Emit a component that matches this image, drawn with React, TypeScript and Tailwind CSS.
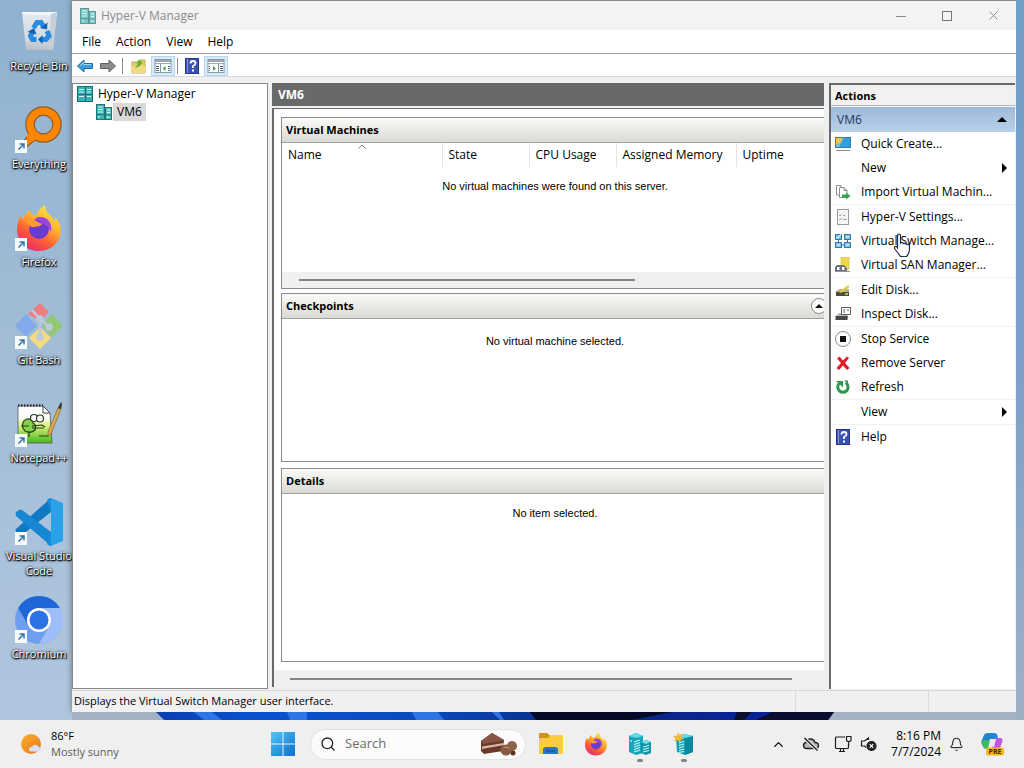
import React from 'react'
import { Bell, ChevronUp, Search, X } from 'lucide-react'

interface IconProps {
  className?: string
}

const ShortcutArrow: React.FC = () => (
  <g>
    <rect x="0" y="34" width="12" height="13" fill="#f8fbfd" />
    <path d="M3.500 43.500 L8.500 38.500 M4.500 38 H9 V42.500" fill="none" stroke="#3573a8" strokeWidth="1.500" />
  </g>
)

const RecycleBin: React.FC = () => (
  <svg viewBox="0 0 48 48" className="h-12 w-12">
    <defs>
      <linearGradient id="bin" x1="0" y1="0" x2="0" y2="1">
        <stop offset="0" stopColor="#e3eaf0" />
        <stop offset="0.7" stopColor="#d2dae2" />
        <stop offset="1" stopColor="#b9bfc6" />
      </linearGradient>
    </defs>
    <path d="M7 4 L42 4 L38 41 Q38 42 36 42 L13 42 Q11 42 11 41 Z" fill="url(#bin)" />
    <path d="M7 4 L42 4 L41.500 8 L7.500 6 Z" fill="#f3f6f9" />
    <path d="M36 6 L42 4 L38 41 L34 42 Z" fill="#c6cfd8" />
    <g fill="none" stroke="#2a8ade" strokeWidth="5">
      <path d="M18.500 20 L22 14.500 H26 L29 19" />
      <path d="M32 23 L34 28 L31 31.500 H26" />
      <path d="M21.500 31.500 H17.500 L15.500 28 L18 23" />
    </g>
    <path d="M25 20 L32 21.500 L32.500 14.500 Z M27.500 27 L23 31.500 L27.500 36 Z M12.500 24 L19 20 L21.500 26.500 Z" fill="#1164b4" />
  </svg>
)

const Everything: React.FC = () => (
  <svg viewBox="0 0 48 48" className="h-12 w-12">
    <path d="M14 29 L20 34 L8 44 L4 40 Z" fill="#ff8400" stroke="#8a5a30" strokeWidth="1.200" />
    <circle cx="28.500" cy="18.500" r="13.500" fill="none" stroke="#8a5a30" strokeWidth="9.500" />
    <circle cx="28.500" cy="18.500" r="13.500" fill="none" stroke="#ff8400" strokeWidth="7.200" />
    <path d="M14 27 L21 33 L17 36 L11 31 Z" fill="#ff8400" />
    <ShortcutArrow />
  </svg>
)

const FirefoxGlyph: React.FC<{ id: string }> = ({ id }) => (
  <g>
    <defs>
      <linearGradient id={id} x1="0.85" y1="0" x2="0.25" y2="1">
        <stop offset="0" stopColor="#fff04a" />
        <stop offset="0.4" stopColor="#ffb02e" />
        <stop offset="0.7" stopColor="#ff5a36" />
        <stop offset="1" stopColor="#e4267c" />
      </linearGradient>
    </defs>
    <path
      d="M24 47 C10 47 2 37 2 25 C2 19 4 14 6 11 C6 14 7 15 8 16 C9 12 12 8 15 6 C15 9 17 11 20 12 C23 8 25 4 30 1 C30 7 33 9 36 12 C38 14 38 16 39 17 C40 16 40 14 40 13 C44 17 46 22 46 27 C45 39 36 47 24 47 Z"
      fill={`url(#${id})`}
    />
    <circle cx="24" cy="25" r="10" fill="#6a3bd0" />
    <path d="M24 13 C32 12 38 19 36 28 C34 24 32 21 27 20 C24 16 22 16 19 16 C21 14 22 13 24 13 Z" fill="#9b45dc" />
    <path d="M10 17 C14 13 20 16 23 18 L27 20 C25 23 22 22 19 23 C16 24 15 21 10 17 Z" fill="#ff9a2c" />
  </g>
)

const Firefox: React.FC = () => (
  <svg viewBox="0 0 48 48" className="h-12 w-12">
    <FirefoxGlyph id="fx-desktop" />
    <ShortcutArrow />
  </svg>
)

const GitBash: React.FC = () => (
  <svg viewBox="0 0 48 48" className="h-12 w-12">
    <path d="M25 1 L34 10 L25 19 L13 12 Z" fill="#ee7d80" />
    <path d="M11 12 L22 24 L11 35 L0 24 Z" fill="#82abee" />
    <path d="M37 12 L48 24 L37 35 L27 24 Z" fill="#93c872" />
    <path d="M25 25 L36 36 L25 47 L14 36 Z" fill="#f3dc80" />
    <g stroke="#b9cbdc" strokeWidth="2.500" fill="#b9cbdc">
      <path d="M17 8 L25 17 V36 M25 17 L34 25" fill="none" />
      <circle cx="25" cy="17" r="2.500" />
      <circle cx="25" cy="35" r="2.500" />
      <circle cx="34" cy="25" r="2.500" />
    </g>
    <ShortcutArrow />
  </svg>
)

const NotepadPlus: React.FC = () => (
  <svg viewBox="0 0 48 48" className="h-12 w-12">
    <defs>
      <linearGradient id="npp" x1="0" y1="0" x2="0" y2="1">
        <stop offset="0.3" stopColor="#ffffff" />
        <stop offset="0.55" stopColor="#d5ef7a" />
        <stop offset="1" stopColor="#45b81c" />
      </linearGradient>
    </defs>
    <path d="M3 6 H28 L35 13 L37 43 L3 43 Z" fill="url(#npp)" stroke="#555" strokeWidth="0.800" />
    <path d="M3 5.500 H28" stroke="#333" strokeWidth="2.500" strokeDasharray="1.500 1.500" />
    <path d="M28 6 V13 H35 Z" fill="#fff" stroke="#444" strokeWidth="1" />
    <g fill="none" stroke="#263c1c" strokeWidth="1.200">
      <path d="M8 28 Q6 21 12 19 Q17 18 18 23 Q22 25 20 30 Q16 34 10 31 Z" fill="#83d24a" />
      <circle cx="19" cy="18" r="3.500" fill="#fff" />
      <circle cx="25" cy="18.500" r="3.500" fill="#fff" />
      <path d="M6 26 H14 M17 26 L27 25 L30 27 M17 28 H29 M24 36 H34 M14 31 V37" />
    </g>
    <path d="M43 8 L46 9 L36 34 L33 36 L33 32 Z" fill="#d9aa50" stroke="#7c622f" strokeWidth="0.700" />
    <path d="M43 8 L46 2 L47 4 L46 9 Z" fill="#333" />
    <ShortcutArrow />
  </svg>
)

const VsCode: React.FC = () => (
  <svg viewBox="0 0 48 48" className="h-12 w-12">
    <path d="M36 0 L48 5 V43 L36 48 Z" fill="#29a3e8" />
    <path d="M36 0 V14 L7 37 Q5 38 4 37 L1 34 Q0 32 1 31 Z" fill="#0f79c4" />
    <path d="M36 48 V34 L7 12 Q5 11 4 12 L1 14 Q0 16 1 18 Z" fill="#1787d4" />
    <path d="M36 0 Q34 0 32 2 L36 14 Z M36 48 Q34 48 32 46 L36 34 Z" fill="#1b8cda" />
    <ShortcutArrow />
  </svg>
)

const Chromium: React.FC = () => (
  <svg viewBox="0 0 48 48" className="h-12 w-12">
    <circle cx="24" cy="24" r="24" fill="#6f9df0" />
    <path d="M3.200 12 A24 24 0 0 1 44.800 12 L24 12 A12 12 0 0 0 13.600 30 Z" fill="#1f66d8" />
    <path d="M44.800 12 A24 24 0 0 1 24 48 L34.400 30 A12 12 0 0 0 24 12 Z" fill="#9fbdf8" />
    <circle cx="24" cy="24" r="12" fill="#fff" />
    <circle cx="24" cy="24" r="9.500" fill="#2a72e5" />
    <ShortcutArrow />
  </svg>
)

const ServerIcon: React.FC<IconProps> = ({ className }) => (
  <svg viewBox="0 0 16 16" className={className}>
    <rect x="0.500" y="0.500" width="8" height="15" fill="#3fb6b0" stroke="#1d7377" />
    <rect x="9.500" y="3.500" width="6" height="12" fill="#52c4be" stroke="#1d7377" />
    <path d="M2 3 H7 M2 5.500 H7 M2 8 H7 M11 6 H14 M11 8.500 H14" stroke="#e6fbfa" />
    <path d="M1 10.500 H8 M10 11 H15" stroke="#1d7377" />
    <path d="M2 13 H4 M11 13 H13" stroke="#e6fbfa" />
  </svg>
)

const RackIcon: React.FC<IconProps> = ({ className }) => (
  <svg viewBox="0 0 16 16" className={className}>
    <rect x="0.500" y="0.500" width="8" height="15" fill="#35b3b3" stroke="#156f78" />
    <rect x="8.500" y="0.500" width="7" height="15" fill="#35b3b3" stroke="#156f78" />
    <path d="M2 3.500 H7 M2 6 H7 M2 10.500 H7 M10 3.500 H14 M10 6 H14 M10 10.500 H14" stroke="#d8f5f5" />
    <path d="M0 8.500 H16" stroke="#17727a" />
  </svg>
)

const BackArrow: React.FC = () => (
  <svg viewBox="0 0 16 16" className="h-4 w-4">
    <path d="M0.500 8 L7 2 V5.500 H15.500 V10.500 H7 V14 Z" fill="#3d9fd9" stroke="#1e6a9e" />
    <path d="M3 8 L6.500 4.500 V6.500 H14" fill="none" stroke="#92d4f5" />
  </svg>
)

const ForwardArrow: React.FC = () => (
  <svg viewBox="0 0 16 16" className="h-4 w-4">
    <path d="M15.500 8 L9 2 V5.500 H0.500 V10.500 H9 V14 Z" fill="#8d8d8d" stroke="#5e5e5e" />
  </svg>
)

const UpFolder: React.FC = () => (
  <svg viewBox="0 0 16 16" className="h-4 w-4">
    <path d="M1 4 H6 L8 2 H14 V15 H1 Z" fill="#e5cb66" stroke="#c9ac4c" />
    <path d="M1 8 H14 V15 H1 Z" fill="#f1dc85" />
    <path d="M3 9.500 Q6 9 7 5.500 L5 5.500 L9 2 L12 5.500 L10 5.500 Q9 10 3 9.500 Z" fill="#57b336" />
  </svg>
)

const PaneIcon: React.FC<{ flip?: boolean }> = ({ flip }) => (
  <svg viewBox="0 0 18 16" className="h-4 w-[18px]">
    <rect x="1" y="1.500" width="16" height="13" fill="#fff" stroke="#8b98a8" />
    <path d="M1 3 H17" stroke="#7c8b9d" strokeWidth="1.500" />
    <path d="M1 5.500 H17" stroke="#9ba8b6" />
    <path d={flip ? 'M11.500 6 V15' : 'M6.500 6 V15'} stroke="#8594a6" />
    <path d={flip ? 'M13 8.500 H16 M13 10.500 H16 M13 12.500 H16 M2 8.500 H3 M2 10.500 H3 M2 12.500 H3' : 'M2 8.500 H5 M2 10.500 H5 M2 12.500 H5 M14 8.500 H16 M14 10.500 H16 M14 12.500 H16'} stroke="#4f6b8c" />
    <path d={flip ? 'M6 8 L9 10.500 L6 13 Z' : 'M11.500 8 L8.500 10.500 L11.500 13 Z'} fill="#4ca53a" />
  </svg>
)

const HelpIcon: React.FC = () => (
  <svg viewBox="0 0 16 16" className="h-4 w-4">
    <rect x="1.500" y="0.500" width="13" height="15" fill="#3b52b5" stroke="#27367f" />
    <path d="M3.500 1 V15" stroke="#8795dd" />
    <path d="M6.500 5.500 Q6.500 3 9 3 Q11.500 3 11.500 5.300 Q11.500 7 9 8 V10" fill="none" stroke="#fff" strokeWidth="1.800" />
    <rect x="8" y="11.500" width="2" height="2" fill="#fff" />
  </svg>
)

const QuickCreateIcon: React.FC = () => (
  <svg viewBox="0 0 16 16" className="h-4 w-4">
    <rect x="0.500" y="1.500" width="15" height="10" fill="#2f9fe0" stroke="#3c7ca8" />
    <path d="M1 2 H9 L4 11 H1 Z" fill="#8cc0a0" />
    <path d="M1 2 H7 L5 7 L1 8 Z" fill="#e8c65a" />
    <path d="M1 14.500 H15" stroke="#8c8c8c" />
  </svg>
)

const ImportIcon: React.FC = () => (
  <svg viewBox="0 0 16 16" className="h-4 w-4">
    <path d="M1.500 1.500 H6 V11 H1.500 Z" fill="#fff" stroke="#8f8f8f" />
    <path d="M4.500 3.500 H9 L12 6.500 V13.500 H4.500 Z" fill="#fff" stroke="#8f8f8f" />
    <path d="M9 3.500 V6.500 H12" fill="none" stroke="#8f8f8f" />
    <path d="M7 10.500 H11 V8.500 L15.500 12 L11 15.500 V13.500 H7 Z" fill="#35a44a" />
  </svg>
)

const SettingsIcon: React.FC = () => (
  <svg viewBox="0 0 16 16" className="h-4 w-4">
    <rect x="2.500" y="0.500" width="11" height="15" fill="#f6f6f6" stroke="#9b9b9b" />
    <path d="M4 6 L5 7 L7 5 M4 10 L5 11 L7 9 M8 6.500 H10 M8 10.500 H12" fill="none" stroke="#a8a8a8" />
  </svg>
)

const SwitchIcon: React.FC = () => (
  <svg viewBox="0 0 16 16" className="h-4 w-4">
    <path d="M3.500 4 V12 M12.500 4 V12 M3.500 12 H12.500" stroke="#2f6c97" />
    <g fill="#79c3ea" stroke="#2e7fae">
      <rect x="0.500" y="1.500" width="6" height="5" />
      <rect x="9.500" y="1.500" width="6" height="5" />
      <rect x="0.500" y="9.500" width="6" height="5" />
      <rect x="9.500" y="9.500" width="6" height="5" />
    </g>
    <path d="M2 4 L3 5 L6 1 M11 4 H14 M2 12 H5 M11 12 H14" fill="none" stroke="#fff" />
  </svg>
)

const SanIcon: React.FC = () => (
  <svg viewBox="0 0 16 16" className="h-4 w-4">
    <rect x="6" y="0.500" width="8" height="12" fill="#f0d84a" stroke="#d3b938" strokeWidth="0.600" />
    <path d="M2 8 H9 L12 11 V14 H0 V10 Z" fill="#6b7079" />
    <path d="M2 10 H4.500 V13 H2 Z M7 10 H9.500 V13 H7 Z" fill="#fff" />
    <path d="M0 14.500 H15" stroke="#8294a6" strokeWidth="1" />
  </svg>
)

const EditDiskIcon: React.FC = () => (
  <svg viewBox="0 0 16 16" className="h-4 w-4">
    <path d="M1 9 L5 7 H14 V13 H1 Z" fill="#b8b08a" />
    <rect x="1" y="10" width="13" height="4" fill="#4f4c3f" />
    <path d="M4 10 L13 3 L14.500 5 L6 11 Z" fill="#e4cf45" />
    <rect x="10" y="11" width="3" height="2" fill="#8fcf4f" />
  </svg>
)

const InspectDiskIcon: React.FC = () => (
  <svg viewBox="0 0 16 16" className="h-4 w-4">
    <path d="M1 10 L4 7 H13 V13 H1 Z" fill="#b6b6b6" />
    <rect x="0.500" y="10" width="12" height="4" fill="#484848" />
    <rect x="6.500" y="1.500" width="9" height="7" fill="#fff" stroke="#5f6670" />
    <path d="M8 4 H10 M12 4 H14 M8 6 H10" stroke="#5f6670" />
  </svg>
)

const StopIcon: React.FC = () => (
  <svg viewBox="0 0 16 16" className="h-4 w-4">
    <circle cx="8" cy="8" r="7.500" fill="#fff" stroke="#8a8a8a" />
    <rect x="5" y="5" width="6" height="6" fill="#111" />
  </svg>
)

const RemoveIcon: React.FC = () => (
  <svg viewBox="0 0 16 16" className="h-4 w-4">
    <path d="M2 3.500 L4.500 1.500 L8 5.500 L12 1.500 L14 3 L10 8 L14.500 13 L12 15 L8 10.500 L4 15 L1.500 13 L6 8 Z" fill="#d81f2a" />
  </svg>
)

const RefreshIcon: React.FC = () => (
  <svg viewBox="0 0 16 16" className="h-4 w-4">
    <path d="M4 4.500 Q1.500 8 4 11.500 Q8 15 12 11.500 Q14.500 7 11 3.500" fill="none" stroke="#2f9a4b" strokeWidth="3" />
    <path d="M1 2 H8 V8.500 Z" fill="#2f9a4b" />
    <path d="M9 1.500 H13 V5 Z" fill="#2f9a4b" />
  </svg>
)

const HandCursor: React.FC<IconProps> = ({ className }) => (
  <svg viewBox="0 0 18 25" className={className}>
    <path
      d="M5 1.500 Q7 0.500 7.500 2.500 V10 Q9 8.500 10.500 10.500 Q12 9.500 13.500 11.500 Q16 10.500 16.500 13 V17 Q16 21 13.500 23.500 H7.500 Q5 20 1.500 15.500 Q1 13 3.500 13.500 L4.500 15 V3 Z"
      fill="#fff"
      fillOpacity="0.85"
      stroke="#222c44"
      strokeWidth="1.200"
    />
  </svg>
)

const desktopIcons = [
  { label: 'Recycle Bin', icon: <RecycleBin /> },
  { label: 'Everything', icon: <Everything /> },
  { label: 'Firefox', icon: <Firefox /> },
  { label: 'Git Bash', icon: <GitBash /> },
  { label: 'Notepad++', icon: <NotepadPlus /> },
  { label: 'Visual Studio\nCode', icon: <VsCode /> },
  { label: 'Chromium', icon: <Chromium /> },
]

const DesktopIcons: React.FC = () => (
  <nav className="w-[72px] shrink-0 pl-[6px]">
    {desktopIcons.map(({ label, icon }) => (
      <button key={label} className="flex h-[98px] w-full flex-col items-center gap-[2px] pt-2">
        {icon}
        <span className="whitespace-pre text-center text-[11px] leading-[15px] text-white [text-shadow:1px_1px_1px_#000,0_1px_2px_#000,0_0_3px_#000]">
          {label}
        </span>
      </button>
    ))}
  </nav>
)

const TitleBar: React.FC = () => (
  <header className="flex h-[30px] items-center border-t border-[#8a8a8a] bg-[#f3f3f3] pl-2 text-[#8c8c8c]">
    <ServerIcon className="h-4 w-4 opacity-70" />
    <h1 className="ml-[5px] flex-1 text-xs">Hyper-V Manager</h1>
    <button aria-label="Minimize" className="flex w-[46px] justify-center">
      <svg viewBox="0 0 10 10" className="h-[10px] w-[10px]"><path d="M0 5.500 H10" stroke="#8c8c8c" /></svg>
    </button>
    <button aria-label="Maximize" className="flex w-[46px] justify-center">
      <svg viewBox="0 0 10 10" className="h-[10px] w-[10px]"><rect x="0.500" y="0.500" width="9" height="9" fill="none" stroke="#777" /></svg>
    </button>
    <button aria-label="Close" className="flex w-[46px] justify-center">
      <X size={15} strokeWidth={1.5} />
    </button>
  </header>
)

const MenuBar: React.FC = () => (
  <nav className="flex h-6 items-center gap-[15px] border-b border-[#a0a0a0] bg-white pl-[10px] text-xs">
    <button>File</button>
    <button>Action</button>
    <button>View</button>
    <button>Help</button>
  </nav>
)

const Toolbar: React.FC = () => (
  <div className="flex h-[23px] items-center border-b border-[#d9d9d9] bg-white pl-[5px] pt-px">
    <button aria-label="Back"><BackArrow /></button>
    <button aria-label="Forward" className="ml-[7px]"><ForwardArrow /></button>
    <span className="mx-[6px] h-4 w-px bg-[#8d8d8d]" />
    <button aria-label="Up one level" className="ml-[2px]"><UpFolder /></button>
    <button aria-label="Show console tree" className="ml-1 flex h-5 w-6 items-center justify-center border border-[#b5d7f3] bg-[#d9ebf9]"><PaneIcon /></button>
    <span className="ml-[2px] h-4 w-px bg-[#8d8d8d]" />
    <button aria-label="Help" className="ml-[6px]"><HelpIcon /></button>
    <button aria-label="Show action pane" className="ml-1 flex h-5 w-6 items-center justify-center border border-[#b5d7f3] bg-[#d9ebf9]"><PaneIcon flip /></button>
  </div>
)

const ConsoleTree: React.FC = () => (
  <aside className="w-[196px] shrink-0 border border-[#828790] bg-white pt-px text-xs">
    <ul>
      <li>
        <button className="flex h-[18px] items-center gap-[5px] pl-1">
          <RackIcon className="h-4 w-4" />
          Hyper-V Manager
        </button>
        <ul>
          <li>
            <button className="flex h-[18px] items-center gap-px pl-[23px]">
              <ServerIcon className="h-4 w-4" />
              <span className="bg-[#d9d9d9] px-1 leading-[18px]">VM6</span>
            </button>
          </li>
        </ul>
      </li>
    </ul>
  </aside>
)

interface SectionProps {
  title: string
  className: string
  collapsible?: boolean
  children: React.ReactNode
}

const Section: React.FC<SectionProps> = ({ title, className, collapsible, children }) => (
  <section className={`flex flex-col overflow-hidden border border-r-0 border-[#8c8c8c] bg-white ${className}`}>
    <div className="flex h-[25px] shrink-0 items-center justify-between border-b border-[#a0a09a] bg-gradient-to-b from-[#fbfbfa] to-[#d9dad2] pl-1">
      <h2 className="text-[11px] font-bold">{title}</h2>
      {collapsible && (
        <button aria-label="Collapse" className="-mr-[3px] flex h-4 w-4 items-center justify-center rounded-full border border-[#888] bg-white">
          <svg viewBox="0 0 8 4" className="h-1 w-2"><path d="M0 4 L4 0 L8 4 Z" fill="#111" /></svg>
        </button>
      )}
    </div>
    {children}
  </section>
)

const columns = [
  { name: 'Name', width: 'w-[160px]' },
  { name: 'State', width: 'w-[87px]' },
  { name: 'CPU Usage', width: 'w-[87px]' },
  { name: 'Assigned Memory', width: 'w-[120px]' },
  { name: 'Uptime', width: '' },
]

const MachineTable: React.FC = () => (
  <table className="w-full table-fixed text-left text-xs">
    <thead>
      <tr className="h-6">
        {columns.map(({ name, width }, i) => (
          <th key={name} scope="col" className={`relative border-r border-[#e4e4e4] px-[6px] font-normal last:border-r-0 ${width}`}>
            {name}
            {i === 0 && (
              <svg viewBox="0 0 8 5" className="absolute left-[76px] top-px h-[5px] w-2">
                <path d="M0.500 4.500 L4 1 L7.500 4.500" fill="none" stroke="#777" />
              </svg>
            )}
          </th>
        ))}
      </tr>
    </thead>
    <tbody>
      <tr>
        <td colSpan={5} className="h-[38px] pl-1 text-center font-['Liberation_Sans',sans-serif] text-[11px]">
          No virtual machines were found on this server.
        </td>
      </tr>
    </tbody>
  </table>
)

const Workspace: React.FC = () => (
  <main className="mb-[2px] ml-1 flex min-w-0 flex-1 flex-col">
    <h2 className="h-[23px] bg-[#696969] pl-[6px] text-xs font-bold leading-[23px] text-white">VM6</h2>
    <div className="mt-[2px] flex flex-1 flex-col border-l-2 border-t border-[#696969] bg-white">
      <div className="flex flex-1 flex-col pb-2 pl-[7px] pt-2">
        <Section title="Virtual Machines" className="h-[172px]">
          <MachineTable />
          <div className="mt-auto flex h-4 items-center bg-[#f0f0f0] pl-[17px]">
            <div className="h-[2px] w-[64%] bg-[#858585]" />
          </div>
        </Section>
        <Section title="Checkpoints" className="mt-1 h-[169px]" collapsible>
          <p className="pl-1 pt-[14px] text-center font-['Liberation_Sans',sans-serif] text-[11px] leading-4">No virtual machine selected.</p>
        </Section>
        <Section title="Details" className="mt-[6px] min-h-[120px] flex-1">
          <p className="pl-1 pt-[11px] text-center font-['Liberation_Sans',sans-serif] text-[11px] leading-4">No item selected.</p>
        </Section>
      </div>
      <div className="flex h-[17px] items-center bg-[#f0f0f0] px-4">
        <div className="h-[2px] w-[97%] bg-[#858585]" />
      </div>
    </div>
  </main>
)

interface Action {
  label: string
  icon?: React.ReactNode
  submenu?: boolean
  divider?: boolean
}

const actions: Action[] = [
  { label: 'Quick Create...', icon: <QuickCreateIcon /> },
  { label: 'New', submenu: true },
  { label: 'Import Virtual Machin...', icon: <ImportIcon />, divider: true },
  { label: 'Hyper-V Settings...', icon: <SettingsIcon /> },
  { label: 'Virtual Switch Manage...', icon: <SwitchIcon /> },
  { label: 'Virtual SAN Manager...', icon: <SanIcon />, divider: true },
  { label: 'Edit Disk...', icon: <EditDiskIcon /> },
  { label: 'Inspect Disk...', icon: <InspectDiskIcon />, divider: true },
  { label: 'Stop Service', icon: <StopIcon /> },
  { label: 'Remove Server', icon: <RemoveIcon /> },
  { label: 'Refresh', icon: <RefreshIcon />, divider: true },
  { label: 'View', submenu: true, divider: true },
  { label: 'Help', icon: <HelpIcon /> },
]

const ActionsPane: React.FC = () => (
  <aside className="relative ml-[5px] mr-px w-[186px] shrink-0 border-l-2 border-t-2 border-[#696969] bg-white text-xs">
    <h2 className="h-[21px] border-b border-[#a9b4c2] bg-[#f3f0f0] pl-1 text-[11px] font-bold leading-[21px]">Actions</h2>
    <button className="mt-px flex h-[25px] w-full items-center justify-between bg-gradient-to-b from-[#9db8d9] to-[#b9d1ea] pl-[6px] pr-2 text-[#1e395b]">
      VM6
      <svg viewBox="0 0 10 5" className="h-[5px] w-[10px]"><path d="M0 5 L5 0 L10 5 Z" fill="#000" /></svg>
    </button>
    <ul>
      {actions.map(({ label, icon, submenu, divider }) => (
        <li key={label} className={divider ? 'border-b border-[#f0f0f0]' : ''}>
          <button className="flex h-6 w-full items-center pl-1 pr-2 text-left">
            <span className="mr-[10px] h-4 w-4 shrink-0">{icon}</span>
            <span className="flex-1 whitespace-nowrap">{label}</span>
            {submenu && (
              <svg viewBox="0 0 5 10" className="h-[10px] w-[5px]"><path d="M0 0 L5 5 L0 10 Z" fill="#000" /></svg>
            )}
          </button>
        </li>
      ))}
    </ul>
    <HandCursor className="absolute left-[62px] top-[148px] h-[25px] w-[18px]" />
  </aside>
)

const StatusBar: React.FC = () => (
  <footer className="flex h-[22px] items-center border-t border-[#d7d7d7] bg-[#f0f0f0] pl-[2px] text-[11px]">
    <p className="flex-1">Displays the Virtual Switch Manager user interface.</p>
    <div className="h-full w-[133px] border-l border-[#dcdcdc]" />
    <div className="h-full w-[88px] border-l border-[#dcdcdc]" />
  </footer>
)

const WallpaperStrip: React.FC = () => (
  <svg viewBox="0 0 944 8" preserveAspectRatio="none" className="h-2 w-full">
    <defs>
      <linearGradient id="strip">
        <stop offset="0" stopColor="#0a3fae" />
        <stop offset="0.15" stopColor="#0b52d0" />
        <stop offset="0.4" stopColor="#0a49bd" />
        <stop offset="0.62" stopColor="#0a2a80" />
        <stop offset="1" stopColor="#0b1fa0" />
      </linearGradient>
    </defs>
    <rect width="944" height="8" fill="#a3b2c2" />
    <path d="M84 0 H762 L756 8 H92 Z" fill="url(#strip)" />
    <path d="M122 0 H140 L150 8 H132 Z M215 0 H235 V8 H218 Z M340 0 H366 L372 8 H344 Z M420 0 H427 L432 8 H428 Z" fill="#2f74e6" />
    <path d="M458 0 H600 L560 8 H464 Z" fill="#050a26" />
    <path d="M665 0 H680 L672 8 H662 Z M700 0 H762 L756 8 H684 Z" fill="#0a0f30" />
  </svg>
)

const WeatherIcon: React.FC = () => (
  <svg viewBox="0 0 22 22" className="h-[22px] w-[22px]">
    <defs>
      <linearGradient id="sun" x1="0" y1="0" x2="1" y2="1">
        <stop offset="0" stopColor="#fbb02c" />
        <stop offset="1" stopColor="#e9731b" />
      </linearGradient>
    </defs>
    <circle cx="11" cy="11" r="10" fill="url(#sun)" />
    <path d="M11 18.500 Q8.500 18 9 15.500 Q10 13.500 12 14 Q13.500 11 16.500 12 Q18.500 12.500 19 14.500 Q21.800 14.500 21.500 17 Q21 18.500 19 18.500 Z" fill="#d9e2f5" />
  </svg>
)

const StartIcon: React.FC = () => (
  <svg viewBox="0 0 24 24" className="h-6 w-6">
    <defs>
      <linearGradient id="win" x1="0" y1="0" x2="1" y2="1">
        <stop offset="0" stopColor="#51c6f5" />
        <stop offset="1" stopColor="#0a6fce" />
      </linearGradient>
    </defs>
    <path d="M0 0 H11.500 V11.500 H0 Z M12.500 0 H24 V11.500 H12.500 Z M0 12.500 H11.500 V24 H0 Z M12.500 12.500 H24 V24 H12.500 Z" fill="url(#win)" />
  </svg>
)

const ChocolateIcon: React.FC = () => (
  <svg viewBox="0 0 38 24" className="h-6 w-[38px]">
    <path d="M1 9 L12 1 L24 8 L23 19 L4 22 L1 19 Z" fill="#6b3a2c" />
    <path d="M1 9 L12 1 L24 8 L4 12 Z" fill="#8a5442" />
    <path d="M2 14.500 L24 11 V13 L2 17 Z" fill="#dcb6a0" />
    <circle cx="32" cy="14" r="5" fill="#8c6249" />
    <circle cx="26" cy="18" r="5.500" fill="#8a5a43" />
    <path d="M22 17 Q26 12 31 17 Q26 15 22 17 Z" fill="#b98c74" />
    <circle cx="33" cy="21" r="2.500" fill="#5b3323" />
  </svg>
)

const FolderIcon: React.FC = () => (
  <svg viewBox="0 0 26 24" className="h-6 w-[26px]">
    <path d="M1 2 Q1 1 2 1 H9 L12 3.500 V8 H1 Z" fill="#cf9413" />
    <path d="M1 6 H10 L13 3 H24 Q25 3 25 4 V21 Q25 22 24 22 H2 Q1 22 1 21 Z" fill="#fbcc3d" />
    <path d="M5 22 V18 Q5 15 8 15 H17 Q20 15 20 18 V22 Z" fill="#2478c9" />
    <path d="M8 19 H17" stroke="#165899" strokeWidth="1.500" />
  </svg>
)

const HyperVIcon: React.FC = () => (
  <svg viewBox="0 0 24 24" className="h-6 w-6">
    <path d="M1 4 L8 1 L15 4 V21 L8 23 L1 20 Z" fill="#15a5b8" />
    <path d="M1 4 L8 1 L15 4 L8 6 Z" fill="#5fdbe6" />
    <path d="M13 10 L18 8 L23 10 V21 L18 23 L13 21 Z" fill="#1193a8" />
    <path d="M13 10 L18 8 L23 10 L18 12 Z" fill="#6fe0e9" />
    <path d="M2 8.500 L4 9.500 M6 10 L12 8 M6 12.500 L12 10.500 M6 15 L12 13 M6 17.500 L12 15.500 M6 20 L12 18 M15 15 L21 13.500 M15 17.500 L21 16 M15 20 L21 18.500" stroke="#c9f8fc" strokeWidth="1.200" />
  </svg>
)

const VmCreateIcon: React.FC = () => (
  <svg viewBox="0 0 24 24" className="h-6 w-6">
    <path d="M4 5 L12 2 L21 4 V20 L13 23 L5 20 Z" fill="#13a0b5" />
    <path d="M13 6 L21 4 V20 L13 23 Z" fill="#0c87a0" />
    <path d="M5 5 L12 2 L21 4 L13 6 Z" fill="#63dce7" />
    <path d="M7 11 L12 9.500 M7 13.500 L12 12 M7 16 L12 14.500 M7 18.500 L12 17 M7 20.500 L12 19.500" stroke="#c9f8fc" strokeWidth="1.200" />
    <path d="M6.500 0 L7.500 3 L11 1.500 L9.500 5 L12 7 L9 7.500 L8 11 L6 8 L2 9.500 L3.500 6.500 L1 4 L5 3.500 Z" fill="#f6b93b" />
  </svg>
)

const CloudOffIcon: React.FC = () => (
  <svg viewBox="0 0 18 16" className="h-4 w-[18px]" fill="none" stroke="#1f1f1f" strokeWidth="1.400">
    <path d="M5 12.500 Q1.500 12.500 1.500 9.500 Q1.500 7 4 6.500 Q5 3 8.500 3 Q12 3 13 6.500 Q16.500 6.500 16.500 9.500 Q16.500 12.500 13 12.500 Z" fill="#b5b5b5" />
    <path d="M2.500 2 L15.500 14.500" stroke="#efefef" strokeWidth="3.500" />
    <path d="M2.500 2 L15.500 14.500" />
  </svg>
)

const NetworkIcon: React.FC = () => (
  <svg viewBox="0 0 18 18" className="h-[18px] w-[18px]" fill="none" stroke="#1f1f1f" strokeWidth="1.200">
    <path d="M11 2 H2.500 Q1.500 2 1.500 3 V12.500 Q1.500 13.500 2.500 13.500 H13.500 Q14.500 13.500 14.500 12.500 V9" />
    <path d="M5 16.500 H11 M6.500 13.500 V16.500 M9.500 13.500 V16.500" />
    <path d="M12.500 1.500 H17 V5 Q17 6.500 14.700 6.500 Q12.500 6.500 12.500 5 Z M14.700 6.500 V10" />
  </svg>
)

const MutedIcon: React.FC = () => (
  <svg viewBox="0 0 18 16" className="h-4 w-[18px]" fill="none" stroke="#1f1f1f" strokeWidth="1.200">
    <path d="M8.500 4 V2 L4.500 5 H1.500 V10 H4.500 L6 11.500" />
    <circle cx="11.500" cy="10" r="4.500" fill="#1f1f1f" />
    <path d="M9.700 8.200 L13.300 11.800 M13.300 8.200 L9.700 11.800" stroke="#fff" />
  </svg>
)

const CopilotIcon: React.FC = () => (
  <svg viewBox="0 0 24 24" className="h-6 w-6">
    <path d="M2 11 Q1 11 1.500 9 L4 3 Q5 1 8 1 H14 Q17 1 17.500 4 L18 7 L10 7 L7 14 H4 Z" fill="#1f86cf" />
    <path d="M1 10 L4 8 L10 8 L8 17 Q5 18 3 15 Z" fill="#3fb868" />
    <path d="M15 6 H20 Q23 6 22.500 9 L20 16 H12 Z" fill="#c15ae0" />
    <path d="M10 14 L13 7 L16 7 L14 15 Z" fill="#f6e3ef" />
    <rect x="6" y="15.500" width="18" height="8" rx="2" fill="#f8b51d" />
    <text x="15" y="22" textAnchor="middle" fontSize="7" fontWeight="700" fill="#3a2500">PRE</text>
  </svg>
)

const Taskbar: React.FC = () => (
  <footer className="flex h-12 shrink-0 items-center bg-[#efefef] pl-5 text-xs">
    <button className="flex w-[251px] items-center gap-[9px] text-left text-[11px] leading-4">
      <WeatherIcon />
      <span className="flex flex-col">
        <span>86°F</span>
        <span className="text-[#5d5d5d]">Mostly sunny</span>
      </span>
    </button>
    <button aria-label="Start"><StartIcon /></button>
    <label className="ml-[15px] flex h-[31px] w-[216px] items-center rounded-full border border-[#e2e2e2] bg-[#fbfbfb] pl-[9px] pr-[7px]">
      <Search size={16} strokeWidth={2} color="#222" />
      <input type="search" aria-label="Search" placeholder="Search" className="ml-[9px] min-w-0 flex-1 bg-transparent text-[13px] outline-none placeholder:text-[#6a6a6a]" />
      <ChocolateIcon />
    </label>
    <div className="ml-3 flex items-center gap-5">
      <button aria-label="File Explorer"><FolderIcon /></button>
      <button aria-label="Firefox">
        <svg viewBox="0 0 48 48" className="h-6 w-6"><FirefoxGlyph id="fx-task" /></svg>
      </button>
      <button aria-label="Hyper-V Manager" className="relative">
        <HyperVIcon />
        <span className="absolute -bottom-[6px] left-[9px] h-[3px] w-[6px] rounded-full bg-[#858585]" />
      </button>
      <button aria-label="Hyper-V Quick Create" className="relative">
        <VmCreateIcon />
        <span className="absolute -bottom-[6px] left-[9px] h-[3px] w-[6px] rounded-full bg-[#858585]" />
      </button>
    </div>
    <div className="ml-auto flex items-center pr-5">
      <button aria-label="Show hidden icons"><ChevronUp size={15} strokeWidth={2} /></button>
      <button aria-label="OneDrive" className="ml-4"><CloudOffIcon /></button>
      <button aria-label="Network" className="ml-[14px]"><NetworkIcon /></button>
      <button aria-label="Volume" className="ml-2"><MutedIcon /></button>
      <button className="ml-[13px] flex flex-col items-end leading-4">
        <span>8:16 PM</span>
        <span>7/7/2024</span>
      </button>
      <button aria-label="Notifications" className="ml-2"><Bell size={15} strokeWidth={1.5} /></button>
      <button aria-label="Copilot" className="ml-4"><CopilotIcon /></button>
    </div>
  </footer>
)

const App: React.FC = () => (
  <div className="flex min-h-screen flex-col font-['Open_Sans',sans-serif] text-black">
    <div className="flex flex-1 bg-gradient-to-b from-[#8fb2d0] via-[#a3bdd6] to-[#b0c6de]">
      <DesktopIcons />
      <div className="flex min-w-0 flex-1 flex-col">
        <div className="flex flex-1 flex-col bg-[#f0f0f0] shadow-[0_0_6px_rgba(0,0,0,0.45)]">
          <TitleBar />
          <MenuBar />
          <Toolbar />
          <div className="flex flex-1 pb-px pt-[6px]">
            <ConsoleTree />
            <Workspace />
            <ActionsPane />
          </div>
          <StatusBar />
        </div>
        <WallpaperStrip />
      </div>
      <div className="w-2 shrink-0 bg-gradient-to-b from-[#6f9fc6] via-[#7d9fc9] to-[#9fb0c4]" />
    </div>
    <Taskbar />
  </div>
)

export default App
